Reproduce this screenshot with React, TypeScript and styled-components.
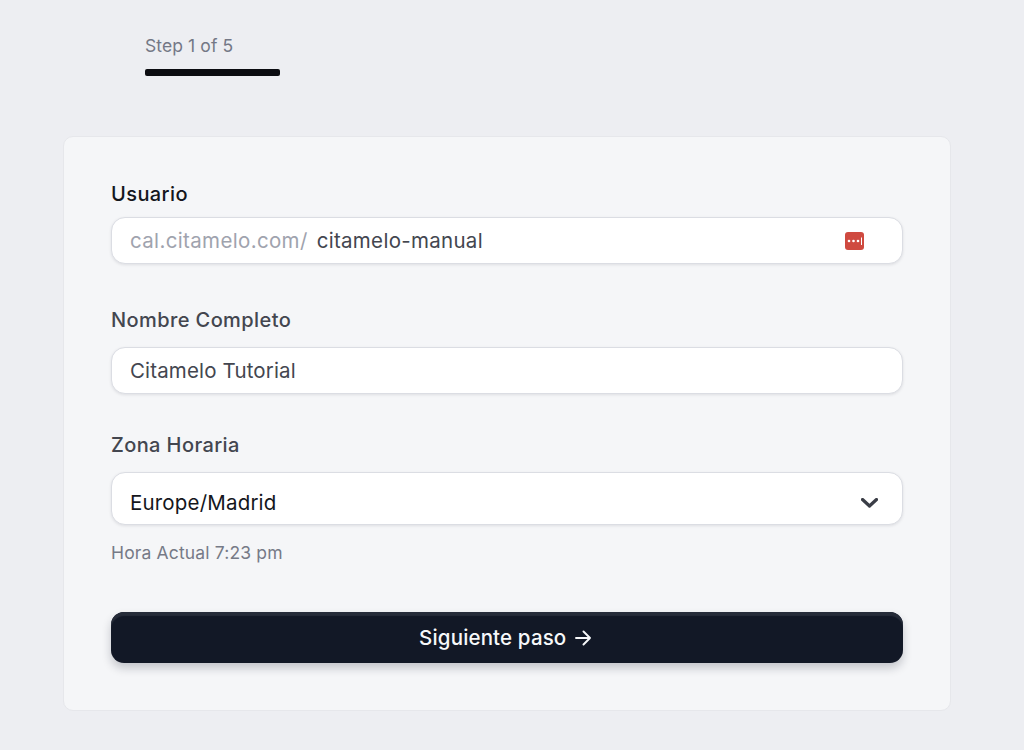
import styled, { createGlobalStyle } from "styled-components";

const GlobalStyle = createGlobalStyle`
  html, body {
    margin: 0;
    padding: 0;
    height: 100%;
    background-color: #edeef2;
    font-family: "Inter", "Liberation Sans", sans-serif;
    overflow: hidden;
  }
`;

const Page = styled.div`
  width: 1024px;
  height: 750px;
  box-sizing: border-box;
  padding: 36px 73px 0 63px;
`;

const Stepper = styled.div`
  margin-left: 82px;
  width: 135px;
  margin-bottom: 60px;
`;

const StepLabel = styled.div`
  font-size: 17.5px;
  line-height: 20px;
  letter-spacing: 0.1px;
  color: #747886;
  margin-bottom: 13px;
`;

const StepBar = styled.div`
  height: 7px;
  border-radius: 2px;
  background-color: #0b0c11;
`;

const Card = styled.form`
  box-sizing: border-box;
  height: 575px;
  padding: 45px 47.5px 0 47px;
  background-color: #f5f6f8;
  border: 1px solid #e6e7eb;
  border-radius: 10px;
`;

const Field = styled.div<{ $gap: number }>`
  margin-bottom: ${(p) => p.$gap}px;
`;

const Label = styled.label<{ $strong?: boolean; $gap: number }>`
  display: block;
  font-size: 20px;
  line-height: 24px;
  font-weight: 500;
  letter-spacing: 0.4px;
  color: ${(p) => (p.$strong ? "#14161c" : "#43464f")};
  margin-bottom: ${(p) => p.$gap}px;
`;

const InputBox = styled.div<{ $height: number; $pad: string }>`
  box-sizing: border-box;
  display: flex;
  align-items: center;
  height: ${(p) => p.$height}px;
  padding: ${(p) => p.$pad};
  background-color: #fff;
  border: 1.5px solid #dbdde3;
  border-radius: 14px;
  box-shadow: 0 1px 3px rgba(20, 24, 40, 0.1);
  font-size: 20.5px;
  line-height: 26px;
`;

const Prefix = styled.span`
  color: #9fa3ae;
  margin-right: 9px;
  letter-spacing: 0.35px;
`;

const Value = styled.span<{ $dark?: boolean; $spacing: number }>`
  flex: 1;
  letter-spacing: ${(p) => p.$spacing}px;
  color: ${(p) => (p.$dark ? "#14161c" : "#43464f")};
`;

const Hint = styled.div`
  margin-top: 18px;
  font-size: 17.5px;
  line-height: 20px;
  letter-spacing: 0.15px;
  color: #767a87;
`;

const SubmitButton = styled.button`
  display: flex;
  align-items: center;
  justify-content: center;
  gap: 9px;
  width: 100%;
  height: 51px;
  margin-top: 49px;
  padding: 0 3px 0 0;
  border: none;
  border-radius: 13px;
  background-color: #121826;
  box-shadow: inset 0 4px 1px #262c39, 0 5px 10px rgba(20, 24, 40, 0.22);
  color: #f7f8fa;
  font-family: inherit;
  font-size: 20.5px;
  font-weight: 500;
  letter-spacing: 0.15px;
`;

const KeyIcon = () => (
  <svg width="19" height="18" viewBox="0 0 19 18" aria-hidden="true">
    <rect width="19" height="18" rx="3" fill="#cf4a40" />
    <circle cx="4" cy="9" r="1.3" fill="#fff" />
    <circle cx="8.5" cy="9" r="1.3" fill="#fff" />
    <circle cx="13" cy="9" r="1.3" fill="#fff" />
    <rect x="16" y="5.5" width="1" height="7.5" fill="#fff" />
  </svg>
);

const Chevron = () => (
  <svg width="17" height="10" viewBox="0 0 17 10" fill="none" aria-hidden="true">
    <path d="M1.5 1.5 8.5 8 15.5 1.5" stroke="#3a3d46" strokeWidth="3.2" strokeLinecap="round" strokeLinejoin="round" />
  </svg>
);

const ArrowRight = () => (
  <svg width="16" height="16" viewBox="0 0 16 16" fill="none" aria-hidden="true">
    <path d="M1 8h14M8.5 1.5 15 8l-6.5 6.5" stroke="#f7f8fa" strokeWidth="1.9" strokeLinecap="round" strokeLinejoin="round" />
  </svg>
);

export default function App() {
  return (
    <>
      <GlobalStyle />
      <Page>
        <Stepper>
          <StepLabel>Step 1 of 5</StepLabel>
          <StepBar />
        </Stepper>
        <Card>
          <Field $gap={44}>
            <Label $strong $gap={11}>Usuario</Label>
            <InputBox $height={47} $pad="0 38px 0 18px">
              <Prefix>cal.citamelo.com/</Prefix>
              <Value $spacing={0.3}>citamelo-manual</Value>
              <KeyIcon />
            </InputBox>
          </Field>
          <Field $gap={39}>
            <Label $gap={15}>Nombre Completo</Label>
            <InputBox $height={47} $pad="0 38px 0 18px">
              <Value $spacing={0.15}>Citamelo Tutorial</Value>
            </InputBox>
          </Field>
          <Field $gap={0}>
            <Label $gap={15}>Zona Horaria</Label>
            <InputBox $height={53} $pad="8px 24px 0 18px">
              <Value $dark $spacing={0.18}>Europe/Madrid</Value>
              <Chevron />
            </InputBox>
          </Field>
          <Hint>Hora Actual 7:23 pm</Hint>
          <SubmitButton type="button">
            Siguiente paso
            <ArrowRight />
          </SubmitButton>
        </Card>
      </Page>
    </>
  );
}
